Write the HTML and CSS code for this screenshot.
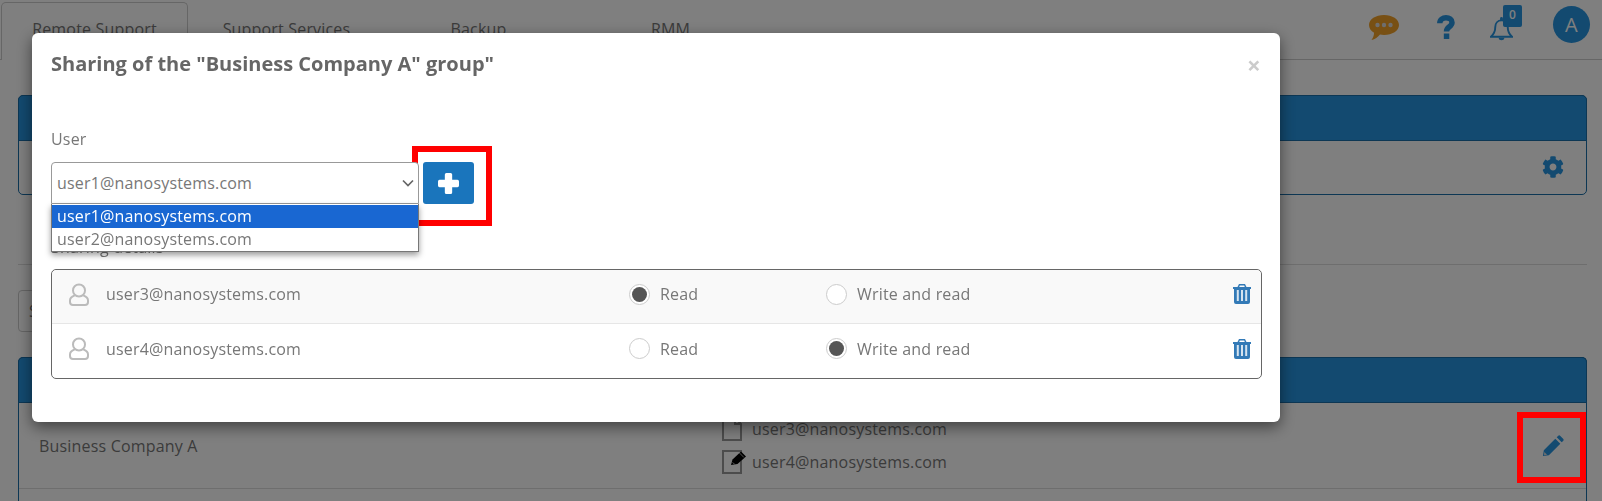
FILE: index.html
```html
<!DOCTYPE html>
<html lang="en">
<head>
    <meta charset="UTF-8">
    <title>Sharing of the group</title>
    <link rel="stylesheet" href="styles.css">
</head>
<body>
    <header class="topbar">
        <nav class="tabs">
            <a class="tab tab-active">Remote Support</a>
            <a class="tab">Support Services</a>
            <a class="tab">Backup</a>
            <a class="tab">RMM</a>
        </nav>
        <div class="top-icons">
            <svg class="icon-chat" viewBox="0 0 30 25"><path fill="#f0a028" d="M15 0c8.300 0 15 4.300 15 10s-6.700 10-15 10c-1.400 0-2.700-.1-4-.4C9 22 6 24.400 2.500 25c1.300-1.800 2.400-4 2.600-7.200C1.900 16 0 13.200 0 10 0 4.300 6.700 0 15 0z"/><circle cx="8.500" cy="10" r="2.200" fill="#ddd"/><circle cx="15" cy="10" r="2.200" fill="#ddd"/><circle cx="21.500" cy="10" r="2.200" fill="#ddd"/></svg>
            <svg class="icon-help" viewBox="0 0 18 24"><path fill="none" stroke="#2694e0" stroke-width="5.500" d="M2.800 8.200C2.800 4.500 5.800 2.800 9 2.800c3.300 0 6 1.800 6 4.700 0 4.500-5.500 4-5.500 9"/><path fill="#2694e0" d="M6.800 18.500h5.500V24H6.800z"/></svg>
            <div class="bell">
                <svg class="icon-bell" viewBox="0 0 24 25"><path fill="none" stroke="#2694e0" stroke-width="2" d="M12 3.500c-4 0-6.500 3-6.500 7 0 5-1.500 7.500-4.500 10h22c-3-2.500-4.500-5-4.500-10 0-4-2.500-7-6.500-7z"/><path fill="#2694e0" d="M9 21.500h6c0 3.500-6 3.500-6 0zM10.500 1.500a1.500 1.500 0 0 1 3 0v2h-3z"/></svg>
                <span class="badge">0</span>
            </div>
            <span class="avatar">A</span>
        </div>
    </header>

    <main class="content">
        <section class="panel panel-top">
            <div class="panel-head"></div>
            <div class="panel-row">
                <svg class="icon-gear" viewBox="0 0 512 512"><path fill="#2694e0" d="M487.400 315.700l-42.600-24.600c4.300-23.200 4.300-47 0-70.200l42.600-24.600c4.900-2.800 7.100-8.600 5.500-14-11.100-35.600-30-67.800-54.700-94.600-3.800-4.100-10-5.100-14.800-2.300L380.800 110c-17.900-15.400-38.500-27.300-60.800-35.100V25.800c0-5.600-3.900-10.500-9.400-11.700-36.700-8.200-74.300-7.800-109.200 0-5.500 1.200-9.400 6.100-9.400 11.700V75c-22.200 7.900-42.800 19.800-60.800 35.100L88.700 85.500c-4.900-2.800-11-1.900-14.800 2.300-24.700 26.700-43.600 58.900-54.700 94.600-1.700 5.400.6 11.200 5.500 14L67.300 221c-4.300 23.200-4.300 47 0 70.200l-42.600 24.600c-4.900 2.800-7.100 8.600-5.500 14 11.100 35.600 30 67.800 54.700 94.600 3.800 4.100 10 5.100 14.800 2.300l42.600-24.600c17.900 15.400 38.500 27.300 60.800 35.100v49.200c0 5.600 3.900 10.500 9.400 11.700 36.700 8.200 74.300 7.800 109.200 0 5.500-1.200 9.400-6.100 9.400-11.700v-49.200c22.200-7.900 42.800-19.800 60.800-35.100l42.600 24.600c4.900 2.800 11 1.900 14.800-2.300 24.700-26.700 43.600-58.900 54.700-94.600 1.500-5.500-.7-11.300-5.600-14.100zM256 336c-44.100 0-80-35.900-80-80s35.900-80 80-80 80 35.900 80 80-35.900 80-80 80z"/></svg>
            </div>
        </section>

        <hr class="divider">

        <input class="search" type="text" value="Search">

        <section class="panel panel-groups">
            <div class="panel-head"></div>
            <div class="group-row">
                <span class="group-name">Business Company A</span>
                <div class="group-users">
                    <div class="group-user">
                        <svg class="icon-file" viewBox="0 0 20 24"><path fill="none" stroke="#999" stroke-width="2" d="M1 1h12l6 6v16H1zM13 1v6h6"/></svg>
                        <span>user3@nanosystems.com</span>
                    </div>
                    <div class="group-user">
                        <svg class="icon-file" viewBox="0 0 20 24"><path fill="none" stroke="#999" stroke-width="2" d="M1 1h18v22H1z"/><path fill="#000" d="M9 15l1.500-5.500L19 1.500l5 5-8.500 7.500z"/><path stroke="#aaa" d="M17.500 3l4.500 4.500M10.500 12.500l2.500 2"/></svg>
                        <span>user4@nanosystems.com</span>
                    </div>
                </div>
                <svg class="icon-pencil" viewBox="0 0 24 24"><path fill="#2694e0" d="M2 16.500 14.500 4l5.500 5.500L7.500 22 1 23zM16 2.500l1.500-1.500c.8-.8 1.800-.8 2.500 0l3 3c.8.800.8 1.800 0 2.500L21.500 8z"/><path fill="#ddd" d="M2.500 18.500l3 3-3.300.6z"/></svg>
            </div>
        </section>
    </main>

    <div class="backdrop"></div>

    <div class="modal">
        <div class="modal-head">
            <h2>Sharing of the "Business Company A" group"</h2>
            <span class="modal-close">×</span>
        </div>
        <div class="modal-body">
            <label class="field-label">User</label>
            <div class="user-picker">
                <div class="select">
                    <span>user1@nanosystems.com</span>
                    <svg class="icon-chevron" viewBox="0 0 12 8"><path fill="none" stroke="#666" stroke-width="1.700" d="M1 1.500l5 5 5-5"/></svg>
                    <ul class="options">
                        <li class="option-selected">user1@nanosystems.com</li>
                        <li>user2@nanosystems.com</li>
                    </ul>
                </div>
                <button class="add-btn" type="button">
                    <svg viewBox="0 0 20 20"><path fill="#fff" d="M6.500 1.500a1.500 1.500 0 0 1 1.500-1.500h4a1.500 1.500 0 0 1 1.500 1.500v5h5a1.500 1.500 0 0 1 1.500 1.500v4a1.500 1.500 0 0 1-1.500 1.500h-5v5a1.500 1.500 0 0 1-1.500 1.500H8a1.500 1.500 0 0 1-1.500-1.500v-5h-5A1.500 1.500 0 0 1 0 12V8a1.500 1.500 0 0 1 1.500-1.500h5z"/></svg>
                </button>
            </div>
            <label class="field-label details-label">Sharing details</label>
            <div class="share-table">
                <div class="share-row share-row-odd">
                    <svg class="icon-user" viewBox="0 0 20 23"><path fill="none" stroke="#bbb" stroke-width="2" d="M10 1.500c3.500 0 6 2.700 6 6s-2.500 6-6 6-6-2.700-6-6 2.500-6 6-6zM5.500 12.500C3 13.500 1 15 1 17.500V19c0 1.700 1.300 3 3 3h12c1.700 0 3-1.300 3-3v-1.500c0-2.500-2-4-4.500-5"/></svg>
                    <span class="share-email">user3@nanosystems.com</span>
                    <label class="radio-cell"><span class="radio radio-on"></span>Read</label>
                    <label class="radio-cell"><span class="radio"></span>Write and read</label>
                    <svg class="icon-trash" viewBox="0 0 18 20"><path fill="#337ab7" d="M6 0h6l1.500 3H18v2h-1v13a2 2 0 0 1-2 2H3a2 2 0 0 1-2-2V5H0V3h4.500zM6.800 1.500 6.200 3h5.600l-.6-1.500z"/><path fill="#d6e4f0" d="M3.800 6h2v11h-2zM8 6h2v11H8zM12.200 6h2v11h-2z"/></svg>
                </div>
                <div class="share-row">
                    <svg class="icon-user" viewBox="0 0 20 23"><path fill="none" stroke="#bbb" stroke-width="2" d="M10 1.500c3.500 0 6 2.700 6 6s-2.500 6-6 6-6-2.700-6-6 2.500-6 6-6zM5.500 12.500C3 13.500 1 15 1 17.500V19c0 1.700 1.300 3 3 3h12c1.700 0 3-1.300 3-3v-1.500c0-2.500-2-4-4.500-5"/></svg>
                    <span class="share-email">user4@nanosystems.com</span>
                    <label class="radio-cell"><span class="radio"></span>Read</label>
                    <label class="radio-cell"><span class="radio radio-on"></span>Write and read</label>
                    <svg class="icon-trash" viewBox="0 0 18 20"><path fill="#337ab7" d="M6 0h6l1.500 3H18v2h-1v13a2 2 0 0 1-2 2H3a2 2 0 0 1-2-2V5H0V3h4.500zM6.800 1.500 6.200 3h5.600l-.6-1.500z"/><path fill="#d6e4f0" d="M3.800 6h2v11h-2zM8 6h2v11H8zM12.200 6h2v11h-2z"/></svg>
                </div>
            </div>
        </div>
        <div class="mark mark-add"></div>
    </div>

    <div class="mark mark-edit"></div>
</body>
</html>
```

FILE: styles.css
```css
* {
    box-sizing: border-box;
}
html, body {
    height: 100%;
}
body {
    margin: 0;
    height: 501px;
    overflow: hidden;
    background: #fff;
    color: #777;
    font-family: "Open Sans", sans-serif;
    font-size: 16px;
    letter-spacing: 0.18px;
}

/* top bar */
.topbar {
    display: flex;
    height: 60px;
    border-bottom: 1px solid #ccc;
}
.tabs {
    display: flex;
    gap: 5px;
    padding: 2px 0 0 1px;
}
.tab {
    width: 187px;
    height: 58px;
    padding-top: 14px;
    border: 1px solid transparent;
    border-bottom: none;
    border-radius: 5px 5px 0 0;
    line-height: 24px;
    text-align: center;
}
.tab-active {
    border-color: #ccc;
    background: #fff;
}
.top-icons {
    display: flex;
    align-items: flex-start;
    margin-left: auto;
    padding-right: 12px;
}
.icon-chat {
    width: 30px;
    height: 25px;
    margin-top: 15px;
}
.icon-help {
    width: 18px;
    height: 24px;
    margin: 15px 0 0 38px;
}
.bell {
    position: relative;
    margin: 17px 0 0 35px;
}
.icon-bell {
    display: block;
    width: 23px;
    height: 24px;
}
.badge {
    position: absolute;
    left: 13px;
    top: -12px;
    width: 19px;
    height: 22px;
    border-radius: 2px;
    background: #2694e0;
    color: #fff;
    font-size: 12px;
    font-weight: 600;
    line-height: 20px;
    text-align: center;
}
.avatar {
    width: 37px;
    height: 37px;
    margin: 6px 0 0 40px;
    border-radius: 50%;
    background: #2694e0;
    color: #fff;
    font-size: 20px;
    line-height: 37px;
    text-align: center;
}

/* page behind the dialog */
.content {
    padding: 35px 15px 0 18px;
}
.panel {
    border: 1px solid #1a6ea8;
    border-radius: 5px;
}
.panel-head {
    height: 46px;
    margin: -1px -1px 0;
    border: 1px solid #1a6ea8;
    border-radius: 5px 5px 0 0;
    background: #2694e0;
}
.panel-top {
    height: 100px;
}
.panel-row {
    display: flex;
    justify-content: flex-end;
    padding: 15px 22px 0 0;
}
.icon-gear {
    width: 22px;
    height: 22px;
}
.divider {
    margin: 69px 0 0;
    border: none;
    border-top: 1px solid #ddd;
}
.search {
    display: block;
    width: 220px;
    height: 42px;
    margin-top: 25px;
    padding: 0 10px;
    border: 1px solid #ccc;
    border-radius: 4px;
    color: #777;
    font: inherit;
}
.panel-groups {
    margin-top: 25px;
    height: 144px;
    border-bottom: none;
    border-radius: 5px 5px 0 0;
}
.group-row {
    display: flex;
    align-items: center;
    height: 86px;
    padding: 0 22px 0 20px;
    border-bottom: 1px solid #ddd;
}
.group-name {
    width: 683px;
}
.group-user {
    display: flex;
    align-items: center;
    gap: 10px;
    height: 33px;
}
.icon-file {
    width: 20px;
    height: 24px;
    overflow: visible;
}
.icon-pencil {
    width: 22px;
    height: 22px;
    margin-left: auto;
}

/* dialog */
.backdrop {
    position: fixed;
    inset: 0;
    background: rgba(0, 0, 0, 0.5);
}
.modal {
    position: fixed;
    left: 32px;
    top: 33px;
    width: 1248px;
    height: 389px;
    border-radius: 6px;
    background: #fff;
    box-shadow: 0 5px 15px rgba(0, 0, 0, 0.5);
}
.modal-head {
    display: flex;
    justify-content: space-between;
    height: 44px;
    padding: 18px 19px 0;
}
.modal-head h2 {
    margin: 0;
    color: #666;
    font-size: 20px;
    font-weight: 700;
    letter-spacing: 0;
    line-height: 26px;
}
.modal-close {
    color: #ccc;
    font-size: 24px;
    font-weight: 700;
    line-height: 28px;
}
.modal-body {
    padding: 50px 19px 0;
}
.field-label {
    display: block;
    line-height: 24px;
}
.user-picker {
    display: flex;
    gap: 4px;
    margin-top: 11px;
}
.select {
    position: relative;
    z-index: 2;
    display: flex;
    align-items: center;
    justify-content: space-between;
    width: 368px;
    height: 42px;
    padding: 0 4px 0 5px;
    border: 1px solid #999;
    border-radius: 4px 4px 0 0;
    background: #fff;
}
.icon-chevron {
    width: 12px;
    height: 8px;
}
.options {
    position: absolute;
    left: -1px;
    top: 41px;
    width: 368px;
    margin: 0;
    padding: 1px 0 0;
    border: 1px solid #777;
    border-top: none;
    background: #fff;
    box-shadow: 0 3px 6px rgba(0, 0, 0, 0.4);
    list-style: none;
    line-height: 23px;
}
.options li {
    height: 23px;
    padding-left: 5px;
}
.options .option-selected {
    background: #1967d2;
    color: #fff;
}
.add-btn {
    display: flex;
    align-items: center;
    justify-content: center;
    width: 51px;
    height: 42px;
    padding: 0;
    border: none;
    border-radius: 3px;
    background: #1a75bc;
}
.add-btn svg {
    width: 21px;
    height: 21px;
}
.details-label {
    margin-top: 31px;
}
.share-table {
    width: 1211px;
    margin-top: 10px;
    border: 1px solid #666;
    border-radius: 5px;
}
.share-row {
    display: flex;
    align-items: center;
    height: 54px;
    padding: 0 10px 5px 17px;
}
.share-row-odd {
    border-bottom: 1px solid #e6e6e6;
    border-radius: 5px 5px 0 0;
    background: #f9f9f9;
}
.icon-user {
    width: 20px;
    height: 23px;
    flex: none;
}
.share-email {
    width: 523px;
    margin-left: 17px;
}
.radio-cell {
    display: flex;
    align-items: center;
    gap: 10px;
    width: 197px;
}
.radio {
    display: flex;
    align-items: center;
    justify-content: center;
    width: 21px;
    height: 21px;
    border: 1px solid #ccc;
    border-radius: 50%;
    background: #fff;
}
.radio-on::after {
    content: "";
    width: 15px;
    height: 15px;
    border-radius: 50%;
    background: #555;
}
.icon-trash {
    width: 18px;
    height: 20px;
    flex: none;
    margin-left: auto;
}

/* red highlight frames drawn over the screenshot */
.mark {
    position: absolute;
    border: 6px solid #f00;
}
.mark-add {
    left: 380px;
    top: 113px;
    width: 80px;
    height: 80px;
}
.mark-edit {
    position: fixed;
    left: 1517px;
    top: 412px;
    width: 69px;
    height: 71px;
}
```
